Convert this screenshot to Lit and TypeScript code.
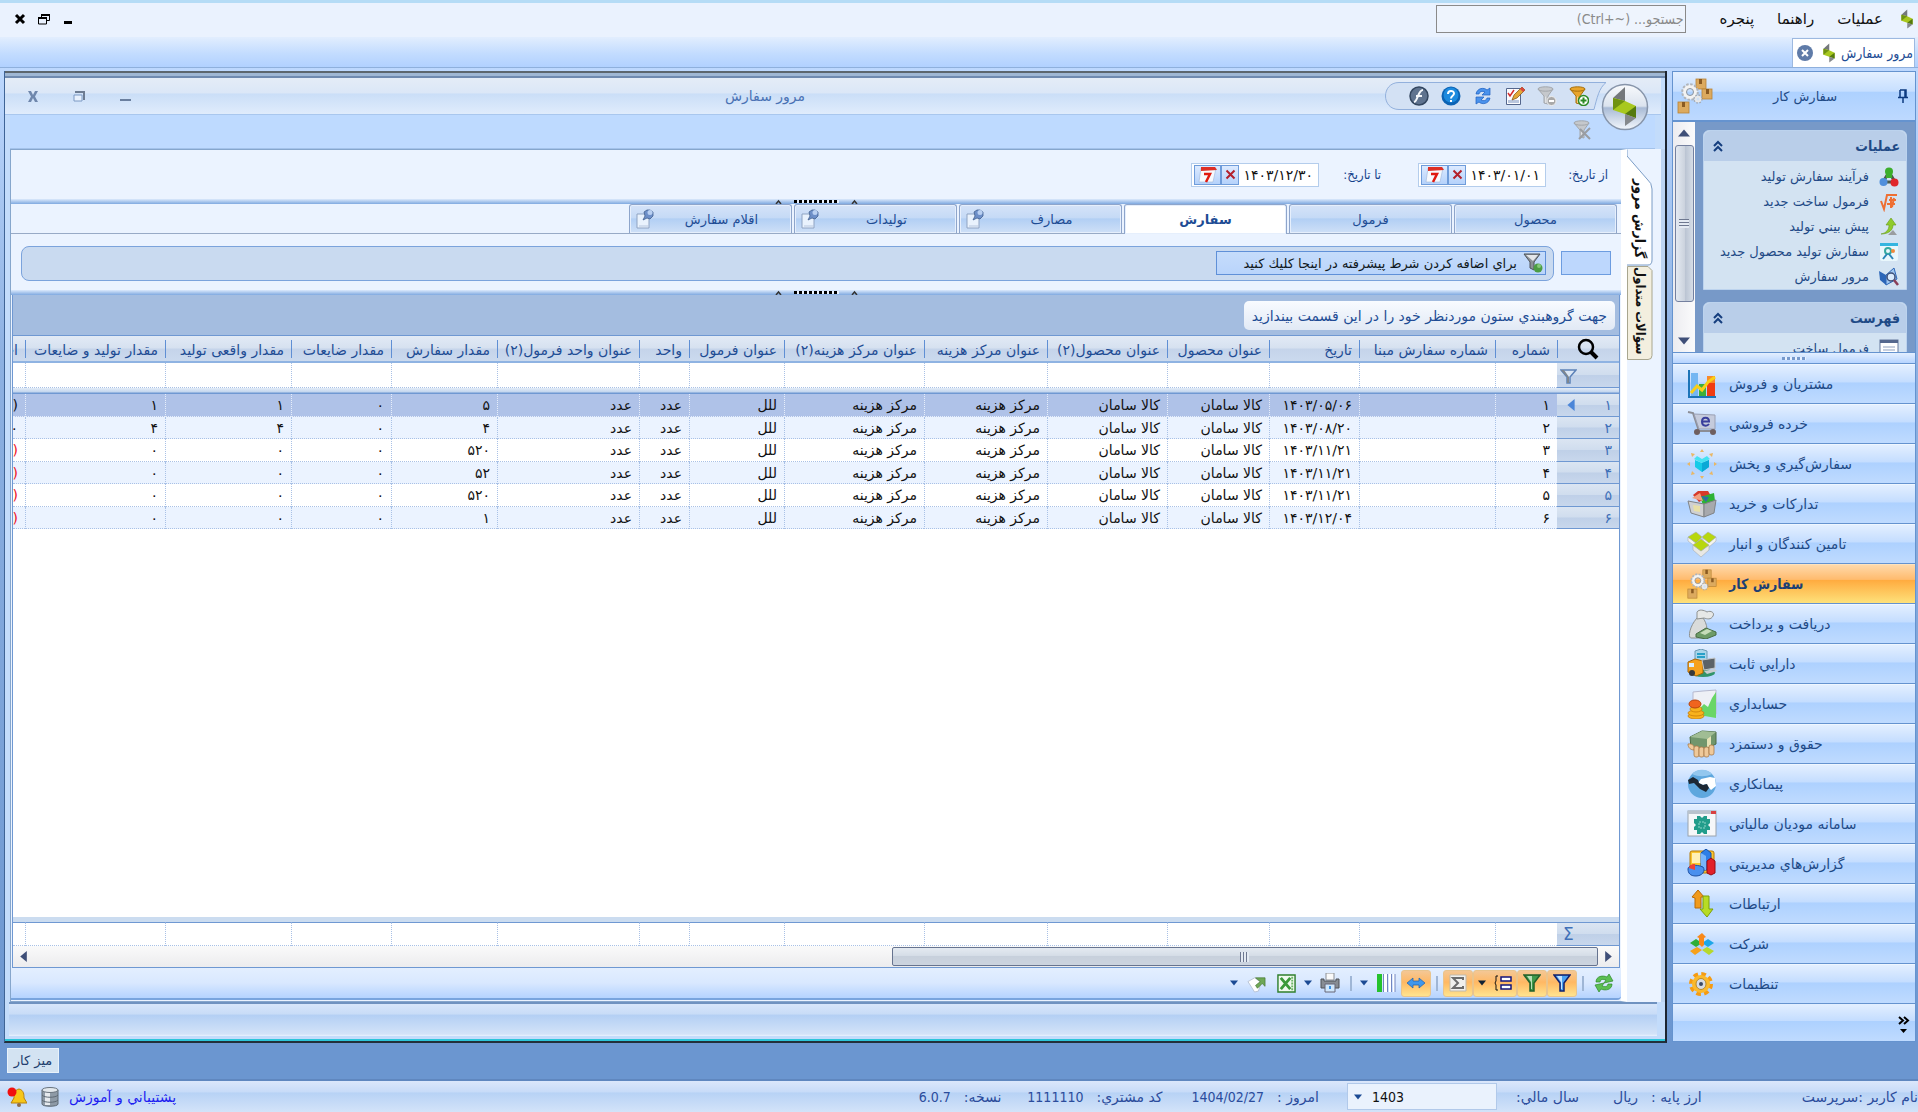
import { LitElement, html, css, svg, nothing, TemplateResult } from "lit";
import { customElement } from "lit/decorators.js";
import { classMap } from "lit/directives/class-map.js";

/* ---------- icons ---------- */

const pic = (size: number, box: string, body: unknown) =>
  html`<svg class="pic" width=${size} height=${size} viewBox=${box} aria-hidden="true">${body}</svg>`;

const brandShape = svg`
  <path d="M24 4v14l-12-3z" fill="#74787b"/>
  <path d="M12 15l12 3 11 5v12l-11-4-12-4z" fill="#a8c81e"/>
  <path d="M12 15l12 3-12 9z" fill="#6f9212"/>
  <path d="M35 23v12l-11-4z" fill="#557a0e"/>
  <path d="M24 31l11 4-11 8z" fill="#85898c"/>`;

const brand = (size: number) => pic(size, "3 3 41 41", brandShape);

const boxesGear = (size: number) =>
  pic(size, "0 0 36 36", svg`
    <g fill="#dcaa5f" stroke="#b98335" stroke-width=".8"><rect x="19" y="1" width="10" height="10"/><rect x="25" y="11" width="10" height="10"/><rect x="1" y="24" width="11" height="11"/></g>
    <g fill="#8a5a22"><path d="M22 1h3v5h-3zM29 11h3v5h-3zM5 24h3v5H5z"/></g>
    <circle cx="13" cy="14" r="5.500" fill="none" stroke="#f3f3f3" stroke-width="4"/>
    <circle cx="13" cy="14" r="7.800" fill="none" stroke="#b0b4ba" stroke-width="2" stroke-dasharray="2.500 1.580"/>
    <circle cx="13" cy="14" r="3.500" fill="none" stroke="#8f959b"/>
    <circle cx="21" cy="21" r="2.500" fill="#cfe0f4" stroke="#e9e9e9" stroke-width="2"/>
    <circle cx="21" cy="21" r="4" fill="none" stroke="#a4a9af" stroke-width="1.400" stroke-dasharray="1.600 1.540"/>`);

const funnel = (fill: string, edge: string, extra: unknown = nothing) => svg`
  <path d="M1 3l6 7v7l4 1v-8l5-7z" fill=${fill} stroke=${edge} stroke-width="1"/>
  <ellipse cx="8.500" cy="3" rx="7.500" ry="2.200" fill=${fill} stroke=${edge}/>
  <path d="M4 6l5 5v6H8v-7z" fill="#ffffff77"/>${extra}`;

const NAV_ICONS: Record<string, TemplateResult> = {
  sales: pic(30, "0 0 30 30", svg`
    <path d="M2 1v27h27" fill="none" stroke="#1c74b8" stroke-width="2"/>
    <rect x="4" y="4" width="7" height="23" fill="#74b6f2"/><rect x="12" y="15" width="7" height="12" fill="#3fae3a"/><rect x="20" y="7" width="8" height="20" fill="#f03b12"/>
    <rect x="20" y="7" width="8" height="7" fill="#f98a2a"/>
    <path d="M4 24l6-7 5 4 6-8 7-5" fill="none" stroke="#f9cf17" stroke-width="3"/>`),
  retail: pic(30, "0 0 30 30", svg`
    <path d="M1 3l5 1 6 18h15" fill="none" stroke="#8b8d95" stroke-width="2"/>
    <path d="M7 5l21 1v14H12z" fill="#c5cbdc" stroke="#9aa0b4"/>
    <path d="M15 12.500h7c0-5-7-5-7 0s5 5 7 2.500" stroke="#3a3f9c" stroke-width="2" fill="none"/>
    <circle cx="10" cy="23" r="3" fill="#6e5f60"/><circle cx="26" cy="23" r="3" fill="#6e5f60"/>`),
  dispatch: pic(30, "0 0 30 30", svg`
    <path d="M8 11l7 3 7-3v7l-7 5-7-5z" fill="#16cbe8"/><path d="M7 10l3-3 5 3 5-3 3 3-8 4z" fill="#46e2f2"/><path d="M15 14v9l7-5v-7z" fill="#0aa9d6"/>
    <g fill="#e9b765"><path d="M15 0l2 3h-4zM15 30l2-3h-4zM0 15l3-2v4zM30 15l-3-2v4zM4 4l4 1-3 3zM26 4l-4 1 3 3zM4 26l4-1-3-3zM26 26l-4-1 3-3z"/></g>`),
  supply: pic(30, "0 0 30 30", svg`
    <path d="M6 6l5-4h10l3 5-12 6z" fill="#d63a2a"/><path d="M13 8l14-4 1 8-12 4z" fill="#2db233"/><path d="M5 9l8-5 3 8z" fill="#f1a080"/><path d="M14 7l8 1-3 5z" fill="#2e6da5"/>
    <path d="M1 12l16 3v13L4 24z" fill="#cfd0d2" stroke="#7f8285"/><path d="M17 15l12-4-2 13-10 4z" fill="#a7a9ad" stroke="#7f8285"/>
    <path d="M6 16l7 1v6l-6-1z" fill="#e8dfa6"/>`),
  stock: pic(30, "0 0 30 30", svg`
    <g stroke="#a8adb0" stroke-width=".6"><path d="M1 8v4l8 6 5-5V9l-5 5z" fill="#f4f4f0"/><path d="M29 8v4l-7 6-6-5V9l6 4z" fill="#f4f4f0"/>
    <path d="M1 8l8-5 6 5-6 6z" fill="#b7d70e"/><path d="M15 8l6-5 8 5-7 6z" fill="#b7d70e"/>
    <path d="M6 16l8 6 8-6v5l-8 7-8-7z" fill="#e8e8e4"/><path d="M6 16l8-6 8 6-8 6z" fill="#b7d70e"/></g>`),
  work: boxesGear(30),
  cash: pic(30, "0 0 30 30", svg`
    <path d="M10 9C2 18 1 29 4 29h14c4-4 2-15-2-20z" fill="#d9dbda" stroke="#8e9190"/>
    <path d="M10 3c2-3 7-2 10 0 4-2 8 1 6 4-2 4-6 3-9 2l-7 1z" fill="#e6e8e7" stroke="#8e9190"/>
    <path d="M9 25l10-6 10 4v3l-10 4-10-2z" fill="#6d9b67" stroke="#476c43"/><path d="M13 24l7-4 5 2-7 4z" fill="#c6dcb9"/>`),
  assets: pic(30, "0 0 30 30", svg`
    <path d="M8 2l6-2 6 2v12H8z" fill="#a9d6ea" stroke="#6d9ab5"/><path d="M10 5h8M10 8h8" stroke="#27a0c8" stroke-width="2"/>
    <ellipse cx="16" cy="24" rx="12" ry="4" fill="#31946a"/>
    <path d="M1 13l7-3 8 2v12l-7 3-8-4z" fill="#f6a21d" stroke="#a66508"/><path d="M2 14h5v4H2z" fill="#d9efff"/><circle cx="5" cy="24" r="3" fill="#383838"/>
    <path d="M15 11l13-2v10l-11 2z" fill="#5b6268" stroke="#c3c6c8"/><path d="M17 22l11-2 2 2-10 3z" fill="#c9ccd0"/>`),
  ledger: pic(30, "0 0 30 30", svg`
    <path d="M6 3l10-1 13-1v24L16 26H6z" fill="#eef0f6" stroke="#b6b9cf"/>
    <path d="M12 20l5-5 4 3 4-9 4-6v26l-17-3z" fill="#69d667"/>
    <g fill="#f8b21c" stroke="#c97c08" stroke-width=".8"><ellipse cx="9" cy="27" rx="8" ry="3"/><ellipse cx="9" cy="24" rx="8" ry="3"/><ellipse cx="9" cy="20" rx="6" ry="3"/></g><ellipse cx="8" cy="15" rx="6" ry="4" fill="#f0641e" stroke="#b8430b"/>`),
  payroll: pic(30, "0 0 30 30", svg`
    <path d="M3 8l12-6 14 1v12l-8 4H4z" fill="#71966c" stroke="#4a6b46"/><path d="M3 8l12-6 14 1-9 7z" fill="#a0bd94"/><path d="M20 10v9l4-2V7z" fill="#e4e2b5"/>
    <g fill="#efc99a" stroke="#a97a48" stroke-width=".8"><path d="M1 15c5-1 7 3 6 6-3 0-6-2-6-6z"/><rect x="7" y="17" width="5" height="11" rx="2"/><rect x="12" y="18" width="5" height="10" rx="2"/><rect x="17" y="18" width="5" height="10" rx="2"/><rect x="22" y="16" width="5" height="10" rx="2"/></g>`),
  contract: pic(30, "0 0 30 30", svg`
    <circle cx="15" cy="15" r="14" fill="#5ea7de"/><path d="M5 5a14 14 0 0 1 20 0c-6 3-14 3-20 0z" fill="#93c7ee"/>
    <path d="M28 9l-5-1-9 2-3 4 5 2 3-1 5 6 5-4z" fill="#fff"/>
    <path d="M1 11l5-3 5 3 1 3 4 2 4-1 2 4-3 4-6-3-6-6-5 1z" fill="#1c2733"/>`),
  tax: pic(30, "0 0 30 30", svg`
    <rect x="1" y="2" width="28" height="25" fill="#f5f7f9" stroke="#9aa4ae"/><rect x="1" y="2" width="28" height="3" fill="#b9c3cd"/><path d="M24 2h5v3h-5z" fill="#d94040"/>
    <path d="M10 7h3l2 2 2-2h3v3h3v4l-2 2 2 2v3h-3v4h-3l-2-2-2 2h-3v-4H7v-3l2-2-2-2v-4h3z" fill="#229d8b"/><path d="M12 13h6v6h-6z" fill="none" stroke="#8fd6c8" stroke-dasharray="2 1"/>`),
  reports: pic(30, "0 0 30 30", svg`
    <rect x="3" y="2" width="24" height="22" rx="2" fill="#fbc52f" stroke="#b57a08"/><path d="M5 4h10v10H5z" fill="#fff0b4"/>
    <path d="M14 4l5-4 5 4v17H14z" fill="#2f7fe6" stroke="#1450a8"/><path d="M14 4l5 3v14h-5z" fill="#79b5fa"/>
    <path d="M20 12l4-3 4 3v12l-4 2-4-2z" fill="#e2202a" stroke="#960c14"/>
    <path d="M1 20c0-4 8-5 15-2 3 4-1 9-7 9s-8-3-8-7z" fill="#4a90ee" stroke="#1b4fa3"/><path d="M8 21V15c-4 0-6 2-6 4z" fill="#ef4136"/>`),
  relations: pic(30, "0 0 30 30", svg`
    <path d="M11 1l6 7h-3v11H8V9L5 8z" fill="#f09a1d" stroke="#b96a06"/><path d="M16 7h6v13h4l-6 8-7-8h3z" fill="#b7dc23" stroke="#7ea00a"/>`),
  company: pic(30, "0 0 30 30", svg`
    <path d="M3 14l6-4 6 4-6 4z" fill="#2fae38"/><path d="M15 14l6-4 6 4-6 4z" fill="#1ea7e8"/><path d="M3 22l7-4 5 3-7 5z" fill="#f7a11a"/><path d="M15 21l5-3 7 4-5 4z" fill="#b6d82c"/>
    <path d="M12 15V9l-2-1 5-4 4 4-2 1v7l-2 2z" fill="#f8891a"/>`),
  settings: pic(30, "0 0 30 30", svg`
    <circle cx="14" cy="15" r="10" fill="none" stroke="#f59b13" stroke-width="4" stroke-dasharray="4.600 3.250"/><circle cx="14" cy="15" r="9" fill="#fbb92a"/><ellipse cx="14" cy="15" rx="5" ry="5.500" fill="#d8dce2" stroke="#b98a2a"/><circle cx="14" cy="15" r="2" fill="#3b4b66"/>`),
};

const TASK_ICONS: Record<string, TemplateResult> = {
  process: pic(20, "0 0 20 20", svg`<path d="M10 5L4 15h12z" fill="none" stroke="#4b5a4b" stroke-width="3"/><circle cx="10" cy="4.500" r="4" fill="#3cae2c"/><path d="M7 5h6v6H7z" fill="#3cae2c"/><circle cx="4.500" cy="15" r="4" fill="#4f8fdc"/><circle cx="15.500" cy="15.500" r="4" fill="#e0262b"/>`),
  formula: pic(20, "0 0 20 20", svg`<path d="M2 9l3 8 3-14h10M10 8h7M12 5v11M8 12h8M15 6l-2 9" fill="none" stroke="#ee6f33" stroke-width="2"/>`),
  forecast: pic(20, "0 0 20 20", svg`<path d="M2 17c5-1 8-4 8-9H7l5-7 5 7h-3c0 5-4 9-12 9z" fill="#8fcb2c" stroke="#64991a" stroke-width=".6"/><path d="M14 13l4 5H9z" fill="#9a9da0"/>`),
  order: pic(20, "0 0 20 20", svg`<rect x="1" y="1" width="18" height="18" rx="2" fill="#e9f7fc"/><path d="M1 1h18v3H1z" fill="#35b5e0"/><circle cx="9" cy="9" r="3" fill="none" stroke="#35a9a0" stroke-width="2"/><path d="M4 17l4-5M14 17l-4-5" stroke="#2b86b8" stroke-width="2"/><circle cx="14" cy="9" r="2" fill="#f08a3c"/>`),
  browse: pic(20, "0 0 20 20", svg`<path d="M0 4l7 4v10L1 13z" fill="#2c66b8"/><path d="M7 8l8-7 3 11-11 6z" fill="#9fc6f0" stroke="#2c66b8"/><circle cx="12" cy="10" r="4" fill="#e8f3ffcc" stroke="#3c4f78" stroke-width="1.500"/><path d="M15 13l4 5" stroke="#8a3f58" stroke-width="2.500"/>`),
  list: pic(20, "0 0 20 20", svg`<rect x="1" y="1" width="18" height="20" fill="#fff" stroke="#64789c"/><path d="M1 1h18v3H1z" fill="#55688e"/><path d="M4 8h12M4 11h12M4 14h12" stroke="#8fa0bd"/>`),
};

const chevrons = html`<svg class="pic" width="12" height="12" viewBox="0 0 12 12" aria-hidden="true"><path d="M2 6l4-4 4 4M2 11l4-4 4 4" fill="none" stroke="#153e7e" stroke-width="2"/></svg>`;

const tri = (dir: "up" | "down" | "left" | "right", w = 8, color = "#3f4f78") => {
  const d = { up: "M0 8L5 2l5 6z", down: "M0 2h10L5 8z", left: "M8 0v10L2 5z", right: "M2 0v10l6-5z" }[dir];
  return html`<svg class="pic" width=${w} height=${w} viewBox="0 0 10 10" aria-hidden="true"><path d=${d} fill=${color}/></svg>`;
};

/* ---------- data ---------- */

const MODULES: [string, string][] = [
  ["sales", "مشتریان و فروش"], ["retail", "خرده فروشي"], ["dispatch", "سفارش‌گیري و پخش"], ["supply", "تدارکات و خرید"],
  ["stock", "تامین کنندگان و انبار"], ["work", "سفارش کار"], ["cash", "دریافت و پرداخت"], ["assets", "دارایي ثابت"],
  ["ledger", "حسابداري"], ["payroll", "حقوق و دستمزد"], ["contract", "پیمانکاري"], ["tax", "سامانه مودیان مالیاتي"],
  ["reports", "گزارش‌هاي مدیریتي"], ["relations", "ارتباطات"], ["company", "شرکت"], ["settings", "تنظیمات"],
];

const TASKS: [string, string][] = [
  ["process", "فرآیند سفارش تولید"], ["formula", "فرمول ساخت جدید"], ["forecast", "پیش بیني تولید"],
  ["order", "سفارش تولید محصول جدید"], ["browse", "مرور سفارش"],
];

const COLUMNS: [string, number][] = [
  ["شماره", 62], ["شماره سفارش مبنا", 136], ["تاریخ", 90], ["عنوان محصول", 102], ["عنوان محصول(۲)", 120],
  ["عنوان مرکز هزینه", 123], ["عنوان مرکز هزینه(۲)", 140], ["عنوان فرمول", 95], ["واحد", 50], ["عنوان واحد فرمول(۲)", 142],
  ["مقدار سفارش", 106], ["مقدار ضایعات", 100], ["مقدار واقعی تولید", 126], ["مقدار تولید و ضایعات", 140], ["اختلاف", 0],
];

interface Order { date: string; qty: string; made: string; diff: string; }
const ORDERS: Order[] = [
  { date: "۱۴۰۳/۰۵/۰۶", qty: "۵", made: "۱", diff: "(۴)" },
  { date: "۱۴۰۳/۰۸/۲۰", qty: "۴", made: "۴", diff: "۰" },
  { date: "۱۴۰۳/۱۱/۲۱", qty: "۵۲۰", made: "۰", diff: "(۵۲۰)" },
  { date: "۱۴۰۳/۱۱/۲۱", qty: "۵۲", made: "۰", diff: "(۵۲)" },
  { date: "۱۴۰۳/۱۱/۲۱", qty: "۵۲۰", made: "۰", diff: "(۵۲۰)" },
  { date: "۱۴۰۳/۱۲/۰۴", qty: "۱", made: "۰", diff: "(۱)" },
];
const FA = "۰۱۲۳۴۵۶۷۸۹";

const base = css`
  :host { display: block; box-sizing: border-box; --narrow: "DejaVu Sans Condensed", "DejaVu Sans", sans-serif; }
  *, *::before, *::after { box-sizing: border-box; }
  button, input, select { font: inherit; color: inherit; margin: 0; padding: 0; border: 0; background: none; border-radius: 0; outline: none; }
  .pic { display: block; flex: none; }
`;

/* ---------- side pane ---------- */

@customElement("side-pane")
export class SidePane extends LitElement {
  static styles = [base, css`
    :host { display: flex; flex-direction: column; width: 244px; flex: none; border: 1px solid #6593cf; color: #1f4a86; margin-bottom: 1px; }
    .head { height: 50px; flex: none; display: flex; align-items: center; padding: 0 6px 0 4px; background: linear-gradient(#e3efff, #c7dfff 40%, #add1ff 42%, #bdd9ff); border-bottom: 2px solid #6593cf; }
    .title { flex: 1; text-align: center; margin: 0; font-size: 13px; font-weight: 400; }
    .tasks { height: 230px; flex: none; display: flex; background: #7799c8; overflow: hidden; }
    .groups { flex: 1; padding: 8px 8px 0; display: flex; flex-direction: column; gap: 12px; }
    .group { border-radius: 6px 6px 0 0; background: #d3e3f2; border: 1px solid #bcd3ee; }
    .group h3 { margin: 0; height: 30px; padding: 0 6px 0 8px; display: flex; align-items: center; justify-content: space-between; font-family: var(--narrow); font-size: 14px; font-weight: 700; background: #b9cee9; border-radius: 6px 6px 0 0; }
    .group ul { list-style: none; margin: 0; padding: 3px 7px 0; }
    .group li { height: 25px; }
    .group a { display: flex; height: 25px; align-items: center; gap: 10px; color: inherit; text-decoration: none; font-size: 13px; white-space: nowrap; }
    .bar { width: 22px; display: flex; flex-direction: column; align-items: center; background: linear-gradient(90deg, #ececf0, #fbfbfc); padding: 5px 1px; }
    .thumb { margin-top: 6px; width: 19px; height: 157px; border: 1px solid #74809f; border-radius: 3px; background: linear-gradient(90deg, #e4eaf2, #ccd3de 50%, #b9c3d2 52%, #d6dde7); display: grid; place-items: center; }
    .thumb i { width: 10px; height: 9px; background: repeating-linear-gradient(#6e7890 0 1px, #e4eaf2 1px 3px); }
    .bar .end { margin-top: auto; }
    .grip { height: 12px; flex: none; display: grid; place-items: center; background: linear-gradient(#e3efff, #b6d4ff); border-top: 1px solid #6593cf; border-bottom: 1px solid #6593cf; }
    .grip i { width: 24px; height: 3px; background: repeating-linear-gradient(90deg, #7699cc 0 3px, #e8f1ff 3px 5px); }
    nav { display: flex; flex-direction: column; flex: none; direction: ltr; }
    .module { height: 40px; display: flex; align-items: center; gap: 12px; padding: 0 0 1px 14px; background: linear-gradient(#e3efff, #c4ddff 45%, #add1ff 47%, #bfdbff); border-bottom: 1px solid #6593cf; border-top: 1px solid #f0f7ff; font-size: 14px; }
    .module.on { font-family: var(--narrow); font-weight: 700; background: linear-gradient(#ffd9aa, #ffbb6e 38%, #ffab3f 40%, #fee17a); border-top-color: #ffe3bd; color: #1d3f74; }
    .more { flex: 1; background: linear-gradient(#e3efff, #c4ddff 45%, #add1ff 47%, #bfdbff); display: flex; align-items: center; padding: 4px 5px 0; }
  `];
  render() {
    return html`
      <header class="head">
        <svg class="pic" width="12" height="14" viewBox="0 0 12 14" aria-hidden="true"><path d="M3 1h6v7M3 1v7M1 8.500h10M6 9v5M8 1v7" fill="none" stroke="#0d3a80" stroke-width="1.500"/></svg>
        <h2 class="title">سفارش کار</h2>${boxesGear(36)}
      </header>
      <div class="tasks">
        <div class="groups">
          <section class="group">
            <h3>عملیات ${chevrons}</h3>
            <ul>${TASKS.map(([k, t]) => html`<li><a href="#${k}">${TASK_ICONS[k]}<span>${t}</span></a></li>`)}</ul>
          </section>
          <section class="group">
            <h3>فهرست ${chevrons}</h3>
            <ul><li><a href="#list">${TASK_ICONS.list}<span>فرمول ساخت</span></a></li></ul>
          </section>
        </div>
        <div class="bar">${tri("up", 12)}<div class="thumb"><i></i></div><span class="end">${tri("down", 12)}</span></div>
      </div>
      <div class="grip"><i></i></div>
      <nav>${MODULES.map(([k, t]) => html`<button class=${classMap({ module: true, on: k === "work" })}>${NAV_ICONS[k]}<span dir="rtl">${t}</span></button>`)}</nav>
      <div class="more"><svg class="pic" width="12" height="20" viewBox="0 0 12 20" aria-hidden="true"><path d="M1 2l4 3.500L1 9M6 2l4 3.500L6 9" fill="none" stroke="#000" stroke-width="2"/><path d="M2 14h7l-3.500 4z"/></svg></div>`;
  }
}

/* ---------- order window ---------- */

@customElement("order-window")
export class OrderWindow extends LitElement {
  static styles = [base, css`
    :host { flex: 1; min-width: 0; display: flex; flex-direction: column; position: relative; background: #c3dcfb; border-left: 1px solid #3f6496; border-right: 2px solid #1c2430; border-bottom: 2px solid #22303a; box-shadow: inset 0 -2px 0 #2cc5d8; padding-bottom: 5px; color: #15428b; }
    .edge { height: 7px; flex: none; background: linear-gradient(#5c666e 0 2px, #9fb7d4 2px 5px, #6f8ab0 5px); }
    .title { height: 37px; flex: none; display: flex; align-items: center; padding: 0 54px 0 20px; margin-right: 4px; background: linear-gradient(#e4ecf7, #dbe7f7 42%, #cadef7 44%, #e0ecfc); border-bottom: 1px solid #a9c7ee; }
    .title h1 { flex: 1; margin: 0; padding-left: 12px; text-align: center; font-size: 14px; font-weight: 400; color: #4a72b4; }
    .quick { position: relative; width: 222px; height: 28px; display: flex; align-items: center; gap: 10px; padding-right: 17px; }
    .shell { position: absolute; inset: 0; width: 100%; height: 100%; }
    .quick button { position: relative; width: 22px; height: 22px; display: grid; place-items: center; }
    .ctl { display: flex; gap: 30px; align-items: center; }
    .ctl button { width: 16px; height: 16px; display: grid; place-items: center; }
    .orb { position: absolute; right: 16px; top: 12px; }
    .tools { height: 34px; flex: none; display: flex; align-items: center; padding: 0 62px 3px 0; margin-right: 10px; margin-left: 5px; background: #bedaff; border-bottom: 1px solid #a3c2ea; }
    .client { flex: 1; min-height: 0; display: flex; margin-left: 5px; }
    .vtabs { width: 38px; flex: none; background: #ebf3ff; border-right: 4px solid #bcd4f2; padding-right: 8px; display: flex; flex-direction: column; }
    .vtab { position: relative; width: 26px; display: grid; place-items: center; writing-mode: vertical-rl; font-family: var(--narrow); font-size: 13px; font-weight: 700; color: #111; }
    .vtab svg { position: absolute; inset: 0; }
    .vtab span { position: relative; }
    .vtab.a { height: 117px; padding-top: 22px; font-size: 14px; }
    .vtab.b { height: 94px; padding-bottom: 4px; }
    .panel { flex: 1; min-width: 0; display: flex; flex-direction: column; background: #ebf3ff; border: 1px solid #86a6cc; border-right: 6px solid #fff; padding-bottom: 1px; }
    .dates { height: 49px; flex: none; display: flex; align-items: center; padding: 0 13px 0 0; font-size: 13px; }
    .dates label { width: 62px; white-space: nowrap; font-family: var(--narrow); }
    .date { display: flex; align-items: center; width: 128px; height: 24px; border: 1px solid #b4cdec; background: #fff; padding: 1px 2px; margin-left: 37px; }
    .date input { flex: 1; min-width: 0; color: #111; padding-right: 3px; font-size: 14px; }
    .date button { width: 18px; height: 20px; border: 1px solid #6f9cda; background: linear-gradient(#dceaff, #b5d2fb); display: grid; place-items: center; }
    .date .cal { width: 27px; }
    .split { height: 5px; flex: none; display: flex; direction: ltr; justify-content: center; align-items: center; gap: 12px; background: linear-gradient(#dbe9fc, #7fa9e0); }
    .split i { width: 45px; height: 3px; background: repeating-linear-gradient(90deg, #000 0 3px, #eaf2ff 3px 5px); }
    .tabs { height: 30px; flex: none; display: flex; align-items: flex-end; gap: 2px; padding-right: 4px; border-bottom: 1px solid #98aac6; }
    .tab { width: 163px; height: 29px; border: 1px solid #8ea5cb; border-bottom: 0; border-radius: 3px 3px 0 0; box-shadow: inset 0 0 0 1px #e6effc; background: linear-gradient(#d5e3f8, #c5daf6 45%, #b2cff4 50%, #cfe0f7); color: #1e4c94; font-size: 13px; display: flex; align-items: center; padding: 0 5px; }
    .tab span { flex: 1; text-align: center; }
    .tab.on { background: #fff; font-weight: 700; margin-bottom: -1px; height: 30px; }
    .cond { height: 56px; flex: none; display: flex; align-items: center; gap: 7px; padding: 2px 10px 0; }
    .mini { width: 50px; height: 24px; border: 1px solid #6c9ce0; background: #bdd7fd; }
    .rail { flex: 1; height: 35px; border: 1px solid #7ba3dc; border-radius: 8px; background: #c9daf0; display: flex; align-items: center; padding: 0 7px; }
    .add { height: 24px; min-width: 330px; border: 1px solid #5f90d8; background: linear-gradient(#c5dcfb, #b9d4fb); display: flex; align-items: center; gap: 6px; padding: 0 2px; color: #101820; font-size: 13px; }
    .grid { flex: 1; min-height: 0; display: flex; flex-direction: column; background: #fff; margin: 0 1px; border: 1px solid #6f98d2; border-top: 0; }
    .hintbar { height: 41px; flex: none; padding: 6px 4px; background: #a4bde0; border-bottom: 1px solid #6f98d2; }
    .hint { display: inline-flex; align-items: center; height: 29px; padding: 0 8px; border-radius: 5px; background: linear-gradient(#f8fbff, #e1e9f5); color: #1e4c94; font-size: 14px; white-space: nowrap; }
    table { width: 100%; table-layout: fixed; border-collapse: separate; border-spacing: 0; font-size: 14px; }
    th, td { padding: 0 7px 0 0; text-align: right; font-weight: 400; white-space: nowrap; overflow: hidden; line-height: 20px; }
    thead .names th { height: 27px; padding-top: 2px; background: linear-gradient(#e2eaf5, #d6e1f0 48%, #c5d4ea 52%, #cbdaee); border-bottom: 2px solid #8fb3e2; color: #1e4c94; position: relative; }
    thead .names th::after { content: ""; position: absolute; left: 0; top: 4px; bottom: 3px; width: 1px; background: #5f8fd4; }
    thead .names th:last-child::after { display: none; }
    thead .names th:first-child { text-align: center; padding: 0; line-height: 0; }
    th .pic { display: inline-block; vertical-align: middle; }
    .row td { border-left: 1px dotted #a9c1e6; border-bottom: 1px dotted #a9c1e6; color: #111; }
    .blank td { height: 25px; }
    .row td:last-child { border-left: 0; padding-right: 7px; }
    .row th { color: #3f70b8; background: linear-gradient(#dbe5f2, #d0ddee 48%, #bfd0e8 52%, #c8d7ec); border-bottom: 1px solid #6f98d2; }
    .gap td { height: 6px; background: linear-gradient(#e3ecf7, #c2d5ee 4px, #6f98d2 5px); }
    .data td, .data th { height: 22px; }
    .data:nth-child(odd) td, .data:nth-child(odd) th { height: 23px; }
    .data:nth-child(even) td { background: #ebf3ff; }
    .data.sel td { background: #afc2e8; border-color: #e6eefb; }
    .data:not(.sel) .neg { color: #f0131e; }
    .rh { display: flex; justify-content: space-between; align-items: center; padding-left: 8px; }
    .fill { flex: 1; }
    .foot { border-top: 5px solid #cbdcf0; }
    .foot td, .foot th { height: 24px; border-top: 1px solid #6f98d2; line-height: 20px; }
    .foot .row th { font-size: 17px; text-align: left; padding: 0 0 0 6px; }
    .fcell { text-align: left; padding-left: 3px; }
    .hscroll { height: 21px; flex: none; display: flex; align-items: center; background: linear-gradient(#fafafa, #ececee); padding: 0 5px; direction: ltr; }
    .hscroll .track { flex: 1; display: flex; justify-content: flex-end; margin-right: 5px; }
    .hthumb { width: 45%; height: 19px; border: 1px solid #66738f; border-radius: 2px; background: linear-gradient(#e4eaf1, #d5dde7 45%, #c7d0dc 50%, #ccd4df); display: grid; place-items: center; }
    .hthumb i { width: 9px; height: 10px; background: repeating-linear-gradient(90deg, #6e7890 0 1px, #e4eaf2 1px 3px); }
    .bar { height: 32px; flex: none; display: flex; align-items: center; padding-right: 2px; background: linear-gradient(#e3efff, #d9e8ff 50%, #b5d3ff); border-bottom: 2px solid #79a4de; border-radius: 0 0 4px 0; }
    .bar button { width: 30px; height: 27px; display: grid; place-items: center; border-radius: 3px; }
    .bar .sep { width: 2px; height: 15px; background: #9fb6d6; margin: 0 5px; }
    .bar .hot { background: linear-gradient(#f4c795, #ffb864 45%, #ffc06a 55%, #ffe48f); border: 1px solid #e9c48d; }
    .bar .wide { width: 44px; display: flex; align-items: center; justify-content: space-around; }
    .bar .dd { width: 14px; }
    .bottom { height: 34px; flex: none; margin: 0 8px 0 4px; border-top: 2px solid #6f92c0; background: linear-gradient(#d6e5fa, #c8dcf7 32%, #b3cff4 34%, #d3e3f8 94%, #eaf3ff); }
  `];

  private cols = () => html`<colgroup><col style="width:62px">${COLUMNS.map(([, w]) => (w ? html`<col style="width:${w}px">` : html`<col>`))}</colgroup>`;

  private split = () => {
    const up = html`<svg class="pic" width="7" height="5" viewBox="0 0 7 5" aria-hidden="true"><path d="M1 5l2.500-3L6 5" fill="none" stroke="#333" stroke-width="1.500"/></svg>`;
    return html`<div class="split">${up}<i></i>${up}</div>`;
  };

  private pinned = () => pic(22, "0 0 22 22", svg`<path d="M2 6h12v14H2z" fill="#e9f2fd" stroke="#8fa3c2"/><path d="M4 18h10" stroke="#b7c7df"/><path d="M9 4l3-2 3 0 3 2v4l-3 3-3-1-4 2 2-4z" fill="#6d8fc8" stroke="#43618f" stroke-width=".8"/><circle cx="15" cy="4.500" r="2.500" fill="#b9d0f2"/>`);

  private dateBox = (id: string, label: string, value: string) => html`
    <label for=${id}>${label}</label>
    <div class="date"><input id=${id} type="text" .value=${value}>
      <button aria-label="پاک کردن"><svg class="pic" width="11" height="11" viewBox="0 0 11 11"><path d="M1.500 1.500l8 8M9.500 1.500l-8 8" stroke="#b3202c" stroke-width="2"/></svg></button>
      <button class="cal" aria-label="تقویم"><svg class="pic" width="20" height="17" viewBox="0 0 20 17"><path d="M3 2h15l-3 14H1z" fill="#f6f9fd" stroke="#9fb6d8" stroke-width=".6"/><path d="M3 1h14l2 3-16 1z" fill="#de2f25"/><path d="M6 8h6l-4 8" fill="none" stroke="#e0190f" stroke-width="2.500"/></svg></button>
    </div>`;

  render() {
    return html`
      <div class="edge"></div>
      <header class="title">
        <div class="quick">
          <svg class="shell" viewBox="0 0 222 28" preserveAspectRatio="none" aria-hidden="true"><path d="M14 .5H221C214 6 212 16 209 27.500H14C-4 27.500-4 .5 14 .5z" fill="#d3e1f4" stroke="#92b0dc"/></svg>
          <button aria-label="فیلتر جدید">${pic(20, "0 0 20 20", funnel("#e9a52b", "#a66f0c", svg`<circle cx="14.500" cy="14.500" r="5" fill="#fff" stroke="#2b8a25" stroke-width="1.500"/><path d="M11.500 14.500h6M14.500 11.500v6" stroke="#2b8a25" stroke-width="2"/>`))}</button>
          <button aria-label="حذف فیلتر">${pic(20, "0 0 20 20", funnel("#c5c8cc", "#a2a6ab", svg`<circle cx="14.500" cy="15" r="4.500" fill="#a9a9a9" stroke="#efefef"/><path d="M12 15h5" stroke="#fff" stroke-width="2"/>`))}</button>
          <button aria-label="ویرایش">${pic(20, "0 0 20 20", svg`<path d="M1.500 2.500h14v16h-14z" fill="#fbfcfe" stroke="#54668c"/><path d="M3 14h11v3H3z" fill="#b9c6dd"/><path d="M3 7l2 3 4-6" fill="none" stroke="#d52a2a" stroke-width="1.500"/><path d="M7 14l2-5 8-8 3 3-8 8z" fill="#e4a838" stroke="#7a4d12" stroke-width=".7"/><path d="M17 1l3 3-2 2-3-3z" fill="#d9453f"/>`)}</button>
          <button aria-label="نوسازی">${pic(20, "0 0 20 20", svg`<path d="M3 8C4 2 11 1 14 4l3-2v7h-8l3-3C9 5 7 5 6 8zM17 12c-1 6-8 7-11 4l-3 2v-7h8l-3 3c3 1 5 1 6-2z" fill="#4a92ec" stroke="#1c5fc0" stroke-width=".7"/>`)}</button>
          <button aria-label="راهنما">${pic(20, "0 0 20 20", svg`<circle cx="10" cy="10" r="9.500" fill="#0c63b4"/><circle cx="10" cy="9" r="7.500" fill="#1d8ade"/><path d="M7 8c0-4 6-4 6-.5 0 2.500-3 2-3 5M10 14v2" fill="none" stroke="#fff" stroke-width="2"/>`)}</button>
          <button aria-label="فرمول">${pic(20, "0 0 20 20", svg`<circle cx="10" cy="10" r="9" fill="#5f738f" stroke="#33465f" stroke-width="1.500"/><path d="M14 4c-5 0-5 11-9 12M7 10h6" fill="none" stroke="#f4f7fb" stroke-width="2"/>`)}</button>
        </div>
        <h1>مرور سفارش</h1>
        <div class="ctl">
          <button aria-label="کوچک"><svg class="pic" width="11" height="12" viewBox="0 0 11 12"><path d="M0 9h11v2H0z" fill="#6a7f9f"/></svg></button>
          <button aria-label="بازیابی"><svg class="pic" width="12" height="11" viewBox="0 0 12 11"><path d="M2 1h9v8" fill="none" stroke="#6d7c92" stroke-width="2"/><path d="M1 4h8v6H1z" fill="#e8f1fd" stroke="#7d9ac4"/></svg></button>
          <button aria-label="بستن"><svg class="pic" width="12" height="11" viewBox="0 0 12 11"><path d="M1 0h3l2 4 2-4h3L8 5.500 11 11H8L6 7l-2 4H1l3-5.500z" fill="#6f87ac"/></svg></button>
        </div>
      </header>
      <div class="tools">${pic(20, "0 0 20 20", funnel("#c5c8cc", "#a2a6ab", svg`<path d="M7 9l10 10M17 8L6 19" stroke="#9a9da2" stroke-width="2"/>`))}</div>
      <svg class="orb pic" width="48" height="48" viewBox="0 0 48 48" aria-hidden="true">
        <defs><linearGradient id="orb" x1="0" y1="0" x2="0" y2="1"><stop offset="0" stop-color="#f8fafc"/><stop offset=".48" stop-color="#dbe3ee"/><stop offset=".52" stop-color="#a9bbd6"/><stop offset="1" stop-color="#f3f7fc"/></linearGradient></defs>
        <circle cx="24" cy="24" r="22.500" fill="url(#orb)" stroke="#8795aa" stroke-width="1.500"/>${brandShape}
      </svg>
      <div class="client">
        <div class="vtabs" role="tablist">
          <button class="vtab a"><svg width="26" height="117" viewBox="0 0 26 117" aria-hidden="true"><path d="M0 .5V7l20 23q5 4 5 10v71q0 5-4 5H0" fill="#fff" stroke="#7a9cc6"/></svg><span>گزارش مرور</span></button>
          <button class="vtab b"><svg width="26" height="94" viewBox="0 0 26 94" aria-hidden="true"><path d="M.5 .5H21l4 4v85q0 4-4 4H.5z" fill="#f3efdf" stroke="#a8a68f"/></svg><span>سؤالات متداول</span></button>
        </div>
        <div class="panel">
          <div class="dates">${this.dateBox("from", "از تاریخ:", "۱۴۰۳/۰۱/۰۱")}${this.dateBox("to", "تا تاریخ:", "۱۴۰۳/۱۲/۳۰")}</div>
          ${this.split()}
          <div class="tabs" role="tablist">
            ${["محصول", "فرمول", "سفارش", "مصارف", "تولیدات", "اقلام سفارش"].map((t, i) => html`<button class=${classMap({ tab: true, on: i === 2 })} role="tab"><span>${t}</span>${i > 2 ? this.pinned() : nothing}</button>`)}
          </div>
          <div class="cond">
            <button class="mini" aria-label="شرط"></button>
            <div class="rail"><button class="add">${pic(20, "0 0 20 20", svg`<path d="M1 1h16l-6 8v8l-4-2V9z" fill="#8c9298" stroke="#4d5358"/><path d="M3 2h12l-5 6z" fill="#e4e7ea"/><circle cx="15" cy="15" r="4.500" fill="#4c9d43"/><circle cx="16" cy="13" r="2" fill="#85c97a"/>`)}<span>براي اضافه كردن شرط پیشرفته در اینجا كلیك کنید</span></button></div>
          </div>
          ${this.split()}
          <div class="grid">
            <div class="hintbar"><div class="hint">جهت گروهبندي ستون موردنظر خود را در این قسمت بیندازید</div></div>
            <table>
              ${this.cols()}
              <thead>
                <tr class="names"><th aria-label="جستجو"><svg class="pic" width="22" height="22" viewBox="0 0 22 22"><circle cx="9" cy="9" r="7" fill="none" stroke="#000" stroke-width="2.500"/><path d="M14 14l6 6" stroke="#000" stroke-width="4"/></svg></th>${COLUMNS.map(([t]) => html`<th scope="col">${t}</th>`)}</tr>
              </thead>
              <tbody>
                <tr class="row blank"><th aria-label="فیلتر"><div class="fcell"><svg class="pic" width="17" height="15" viewBox="0 0 17 15"><path d="M1 1h15l-6 7v6H7V8z" fill="#dce7f5" stroke="#5c82b8" stroke-width="1.500"/><path d="M1 1l6 7v6h2V8L4 1z" fill="#7d868f"/></svg></div></th>${COLUMNS.map(() => html`<td></td>`)}</tr>
                <tr class="gap"><td colspan="16"></td></tr>
                ${ORDERS.map((o, i) => html`<tr class=${classMap({ row: true, data: true, sel: i === 0 })}>
                  <th scope="row"><div class="rh"><span>${FA[i + 1]}</span>${i === 0 ? tri("left", 12, "#4c86d8") : nothing}</div></th>
                  <td>${FA[i + 1]}</td><td></td><td>${o.date}</td><td>کالا سامان</td><td>کالا سامان</td><td>مرکز هزینه</td><td>مرکز هزینه</td>
                  <td>للل</td><td>عدد</td><td>عدد</td><td>${o.qty}</td><td>۰</td><td>${o.made}</td><td>${o.made}</td>
                  <td class=${classMap({ neg: o.diff !== "۰" })}>${o.diff}</td></tr>`)}
              </tbody>
            </table>
            <div class="fill"></div>
            <table class="foot">${this.cols()}<tbody><tr class="row"><th scope="row">Σ</th>${COLUMNS.map(() => html`<td></td>`)}</tr></tbody></table>
            <div class="hscroll">${tri("left", 11)}<div class="track"><div class="hthumb"><i></i></div></div>${tri("right", 11)}</div>
          </div>
          <div class="bar">
            <button aria-label="نوسازی">${pic(20, "0 0 20 20", svg`<path d="M2 9C2 3 9 2 13 4l2-3 4 7-9 2 2-3C8 6 7 6 6 9zM18 11c0 6-7 7-11 5l-2 3-4-7 9-2-2 3c4 1 5 1 6-2z" fill="#5cbf52" stroke="#2c8a2a" stroke-width=".7"/>`)}</button>
            <i class="sep"></i>
            <button class="hot" aria-label="فیلتر">${pic(18, "0 0 18 18", svg`<path d="M1 1h16l-6 8v8H7V9z" fill="#4aa0f0" stroke="#10206c" stroke-width="1.500"/><path d="M4 2h5v13H8V8z" fill="#c7e4ff"/>`)}</button>
            <button class="hot" aria-label="فیلتر ستون">${pic(18, "0 0 18 18", svg`<path d="M1 1h16l-6 8v8H7V9z" fill="#3f9a4b" stroke="#23622c" stroke-width="1.500"/><path d="M4 2h5v13H8V8z" fill="#b8e0b8"/>`)}</button>
            <button class="hot wide" aria-label="گروه بندی">${pic(18, "0 0 18 18", svg`<path d="M4 2H2v5L1 9l1 2v5h2" fill="none" stroke="#111"/><path d="M7 3h10v4H7zM7 11h10v4H7z" fill="#fff" stroke="#15157c" stroke-width="1.500"/>`)}${tri("down", 8, "#123")}</button>
            <button class="hot" aria-label="جمع">${pic(18, "0 0 18 18", svg`<path d="M1 1h16v16H1z" fill="#f0f0ee" stroke="#c0b9ab"/><path d="M14 6V4H4l5 5-5 5h10v-2" fill="none" stroke="#6c6c6c" stroke-width="2"/>`)}</button>
            <i class="sep"></i>
            <button class="hot" aria-label="اندازه ستون">${pic(20, "0 0 20 20", svg`<path d="M1 10l6-5v3h6V5l6 5-6 5v-3H7v3z" fill="#3f97ec" stroke="#1b5fae" stroke-width=".7"/>`)}</button>
            <button aria-label="ستون ها">${pic(20, "0 0 20 20", svg`<path d="M1 1h5v18H1z" fill="#25c22d"/><path d="M8 1h3v18H8zM13 1h2v18h-2zM17 1h2v18h-2z" fill="#fff"/><path d="M7.500 1v18M11.500 1v18M15.500 1v18M19 1v18" stroke="#7386c0"/>`)}</button>
            <button class="dd" aria-label="بیشتر">${tri("down", 8, "#1b4a94")}</button>
            <i class="sep"></i>
            <button aria-label="چاپ">${pic(20, "0 0 20 20", svg`<path d="M6 0h8v7H6z" fill="#fafafa" stroke="#8c8f94"/><path d="M1 6h3v2h12V6h3v9H1z" fill="#878c93" stroke="#4e5359"/><path d="M5 11h10v8H5z" fill="#cfe6fb" stroke="#667"/><path d="M9 13h2v3H9z" fill="#3a8fe0"/>`)}</button>
            <button class="dd" aria-label="بیشتر">${tri("down", 8, "#1b4a94")}</button>
            <button aria-label="اکسل">${pic(19, "0 0 20 20", svg`<path d="M1 1h18v18H1z" fill="#f1faef" stroke="#2f7f2d" stroke-width="1.500"/><path d="M4 4l10 12M14 4L4 16" stroke="#3c9a39" stroke-width="3"/><path d="M16 3v14" stroke="#6ab566" stroke-width="2" stroke-dasharray="2 1"/>`)}</button>
            <button aria-label="ارسال">${pic(19, "0 0 20 20", svg`<path d="M1 8l7-4 7 5-3 9-4 1z" fill="#fff" stroke="#b8c3d4"/><path d="M9 4h10v9l-3-3-5 5-2-3 5-4z" fill="#6fa856" stroke="#44742f" stroke-width=".7"/>`)}</button>
            <button class="dd" aria-label="بیشتر">${tri("down", 8, "#1b4a94")}</button>
          </div>
        </div>
      </div>
      <div class="bottom"></div>`;
  }
}

/* ---------- shell ---------- */

@customElement("app-root")
export class AppRoot extends LitElement {
  static styles = [base, css`
    :host { display: flex; flex-direction: column; min-height: 100vh; direction: rtl; overflow: hidden; font-family: "DejaVu Sans", sans-serif; font-size: 13px; background: #6b96d0; color: #111; }
    .menubar { height: 37px; flex: none; display: flex; align-items: center; background: #eaf2fe; border-top: 3px solid #b5dcf6; padding: 0 1px 2px 14px; }
    .menus { display: flex; align-items: center; gap: 23px; padding-right: 14px; }
    .menus button { font-size: 15px; height: 28px; }
    .search { width: 250px; height: 28px; border: 1px solid #8a8a8a; background: #eef4fd; margin-right: 34px; padding: 0 1px; font-family: var(--narrow); font-size: 14px; color: #888; }
    .search::placeholder { color: #8a8a8a; opacity: 1; }
    .mdi { margin-right: auto; display: flex; gap: 12px; }
    .mdi button { width: 12px; height: 14px; display: grid; place-items: center; }
    .strip { height: 31px; flex: none; display: flex; align-items: flex-end; padding-right: 3px; background: linear-gradient(#e2eefe, #c3dcff 55%, #b1d1ff); border-bottom: 1px solid #8fb0dc; }
    .doc { height: 29px; width: 123px; background: #fff; border: 1px solid #9db9e0; border-bottom: 0; display: flex; align-items: center; gap: 2px; padding: 0 1px 0 4px; font-family: var(--narrow); font-size: 14px; white-space: nowrap; color: #1e4c94; }
    .doc .x { margin-right: auto; }
    .work { flex: 1; display: flex; align-items: stretch; gap: 5px; padding: 3px 2px 0 4px; background: linear-gradient(#bdd8fe, #8db1e2 30%, #6b96d0); }
    .dock { height: 36px; flex: none; display: flex; justify-content: flex-end; align-items: center; padding: 0 7px 2px; }
    .desk { height: 25px; width: 52px; background: #d3e3f2; border: 1px solid #e8f2fb; color: #1e3e6e; }
    .status { height: 33px; flex: none; display: flex; align-items: center; white-space: nowrap; background: linear-gradient(#dbe7fb, #c7dbf8 36%, #b7d2f5 38%, #d3e3f9); border-top: 2px solid #5f87bf; color: #2b4c9c; padding: 0 0 0 7px; font-size: 14px; }
    .pair { display: flex; gap: 13px; }
    .num { font-family: var(--narrow); }
    .user { margin-left: 100px; }
    .cur { margin-left: 34px; }
    .year { margin-left: 19px; }
    .today { margin-right: 28px; margin-left: 29px; }
    .cust { margin-left: 26px; }
    .combo { width: 150px; height: 27px; display: flex; direction: ltr; align-items: center; gap: 10px; padding-left: 6px; background: #eaf2fd; border: 1px solid #b1c9ea; }
    .combo select { flex: 1; appearance: none; color: #111; font-family: var(--narrow); }
    .help { margin-right: auto; color: #1d1df0; text-decoration: none; }
    .tray { display: flex; gap: 13px; margin-right: 9px; }
  `];
  render() {
    return html`
      <header class="menubar">
        ${brand(20)}
        <nav class="menus"><button>عملیات</button><button>راهنما</button><button>پنجره</button></nav>
        <input class="search" type="search" aria-label="جستجو" placeholder="جستجو... \u200e(Ctrl+~)\u200e">
        <div class="mdi">
          <button aria-label="کوچک"><svg class="pic" width="8" height="10" viewBox="0 0 8 10"><path d="M0 7h8v3H0z"/></svg></button>
          <button aria-label="بازیابی"><svg class="pic" width="12" height="12" viewBox="0 0 12 12"><path d="M3.500 4V1.500h8v6H9" fill="none" stroke="#000"/><path d="M3 1h9v2H3zM0 4h9v2H0z"/><path d="M.5 5v6h8V5" fill="none" stroke="#000"/></svg></button>
          <button aria-label="بستن"><svg class="pic" width="12" height="12" viewBox="0 0 12 12"><path d="M2 2l8 8M10 2l-8 8" stroke="#000" stroke-width="3"/></svg></button>
        </div>
      </header>
      <div class="strip">
        <div class="doc"><span>مرور سفارش</span>${brand(20)}<svg class="pic x" width="16" height="16" viewBox="0 0 16 16" aria-hidden="true"><circle cx="8" cy="8" r="8" fill="#5f7ba8"/><path d="M5 5l6 6M11 5l-6 6" stroke="#fff" stroke-width="2"/></svg></div>
      </div>
      <main class="work"><side-pane></side-pane><order-window></order-window></main>
      <div class="dock"><button class="desk">میز کار</button></div>
      <footer class="status">
        <span class="user">نام کاربر :سرپرست</span>
        <span class="pair cur"><span>ارز پایه :</span><span>ریال</span></span>
        <label class="year" for="year">سال مالي:</label>
        <div class="combo">${tri("down", 8, "#1b4a94")}<select id="year"><option>1403</option></select></div>
        <span class="pair today"><span>امروز :</span><span class="num" dir="ltr">1404/02/27</span></span>
        <span class="pair cust"><span>کد مشتري:</span><span class="num">1111110</span></span>
        <span class="pair"><span>نسخه:</span><span class="num">6.0.7</span></span>
        <a class="help" href="#help">پشتیباني و آموزش</a>
        <span class="tray">
          ${pic(20, "0 0 20 20", svg`<path d="M2 3v14c0 3 16 3 16 0V3z" fill="#8e9aa6" stroke="#5f6a75"/><path d="M5 4h5v14H5z" fill="#e6eaee"/><ellipse cx="10" cy="3" rx="8" ry="2.500" fill="#e3e8ec" stroke="#6a747e"/><path d="M2 8c2 3 14 3 16 0M2 13c2 3 14 3 16 0" fill="none" stroke="#5f6a75"/>`)}
          ${pic(20, "0 0 20 20", svg`<path d="M12 2c5 1 5 6 5 9l3 5H4l3-5c0-4 0-8 5-9z" fill="#f6c619" stroke="#b9820b"/><circle cx="12" cy="18" r="2" fill="#8d6c4a"/><circle cx="5" cy="5" r="4.500" fill="#f10f0f"/>`)}
        </span>
      </footer>`;
  }
}
